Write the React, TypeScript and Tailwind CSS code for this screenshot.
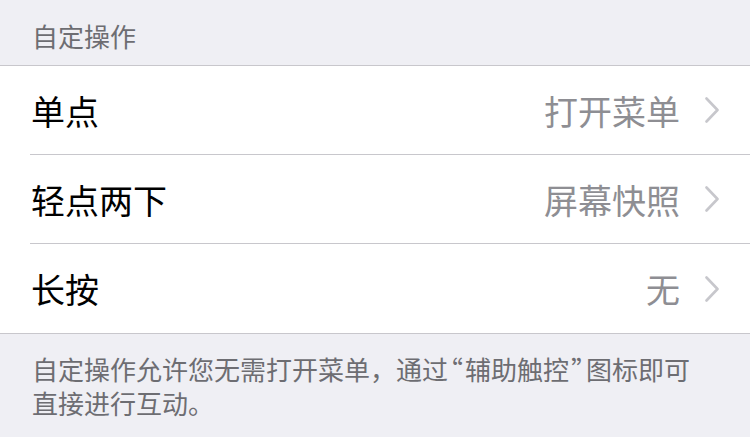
const rows = [
  { label: '单点', value: '打开菜单' },
  { label: '轻点两下', value: '屏幕快照' },
  { label: '长按', value: '无' },
];

function Chevron() {
  return (
    <svg width="16" height="26" viewBox="0 0 16 26" fill="none" className="shrink-0">
      <path d="M2.5 1.5 L13.5 13 L2.5 24.5" stroke="#c7c7cc" strokeWidth="2.6" strokeLinecap="round" strokeLinejoin="round" />
    </svg>
  );
}

export default function App() {
  return (
    <div
      className="w-[750px] h-[437px] bg-[#efeff4] overflow-hidden"
      style={{ fontFamily: '"Noto Sans CJK SC", "Noto Sans", sans-serif' }}
    >
      <div className="h-[66px] pl-[32px] pt-[19px] text-[26px] leading-[33px] text-[#6d6d72] border-b border-[#c8c7cc]">
        自定操作
      </div>
      <div className="bg-white border-b border-[#c8c7cc]">
        {rows.map((row, i) => (
          <div key={row.label} className="pl-[30px]">
            <div
              className={`h-[89px] flex items-center justify-between pr-[30px] ${
                i < rows.length - 1 ? 'border-b border-[#c8c7cc]' : ''
              }`}
            >
              <span className="text-[34px] text-black pl-[1px]">{row.label}</span>
              <div className="flex items-center gap-[24px]">
                <span className="text-[34px] text-[#8e8e93]">{row.value}</span>
                <Chevron />
              </div>
            </div>
          </div>
        ))}
      </div>
      <p className="pl-[32px] pr-[30px] pt-[18px] text-[26px] leading-[34px] text-[#6d6d72]">
        自定操作允许您无需打开菜单，通过
        <span className="px-[2px] [font-feature-settings:'halt']">“</span>
        辅助触控
        <span className="px-[2px] [font-feature-settings:'halt']">”</span>
        图标即可
        <br />
        直接进行互动。
      </p>
    </div>
  );
}
